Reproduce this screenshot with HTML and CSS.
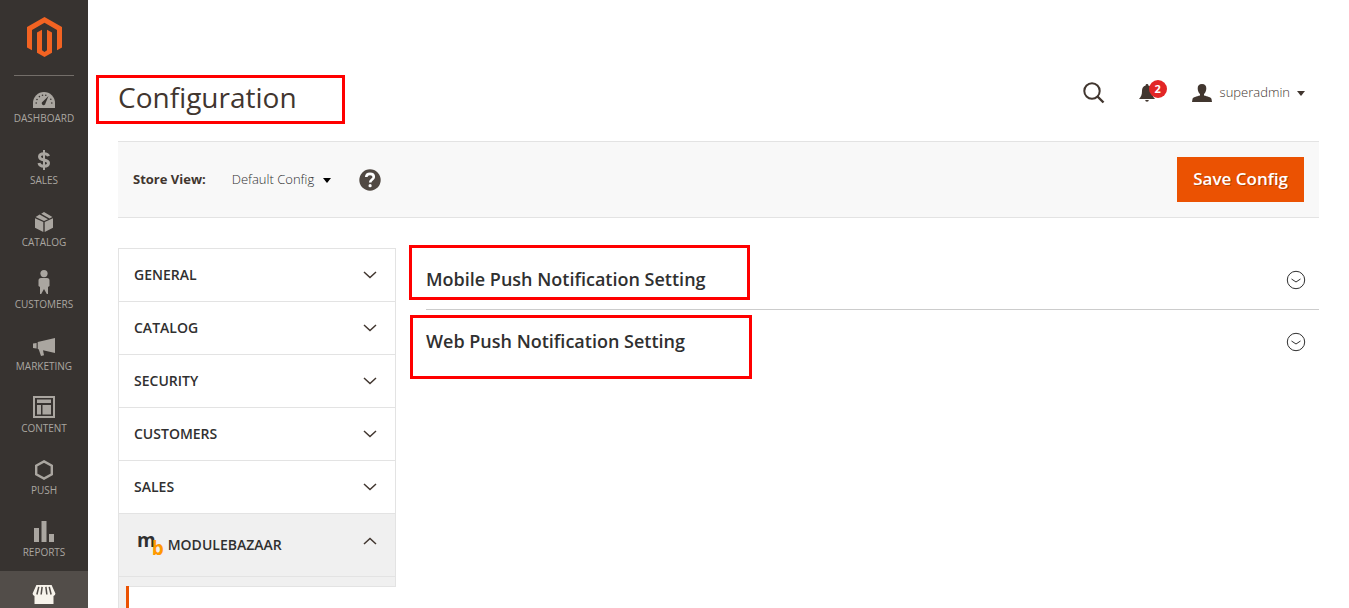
FILE: index.html
```html
<!DOCTYPE html>
<html lang="en">
<head>
<meta charset="utf-8">
<title>Configuration</title>
<link rel="stylesheet" href="styles.css">
</head>
<body>
<div class="page">
  <aside class="sidebar">
    <a class="logo" href="#" aria-label="Admin home">
      <svg width="35" height="40" viewBox="0 0 35 40" fill="#f26322"><path d="M17.500 0 35 10v20.500l-5 2.800V13L17.500 5.700 5 13v20.300l-5-2.800V10zM10 15.500l5-2.800v20.600l2.500 1.600 2.500-1.600V12.700l5 2.800v20.300L17.500 40 10 35.800z"/></svg>
    </a>
    <nav class="menu">
      <a class="menu-item" href="#"><span class="menu-icon"><svg width="22" height="16" viewBox="0 0 22 16"><path fill="currentColor" d="M0 16V11a11 11 0 0 1 22 0v5z"/><g fill="#373330"><path d="m15.500 4-3 7.200a1.900 1.900 0 1 1-2.600-1.700z"/><circle cx="3.200" cy="11" r=".8"/><circle cx="4" cy="7.500" r=".8"/><circle cx="6.400" cy="4.600" r=".8"/><circle cx="9.500" cy="3.200" r=".8"/><circle cx="12.800" cy="3.200" r=".8"/><circle cx="17.800" cy="7.300" r=".8"/><circle cx="18.800" cy="11" r=".8"/></g></svg></span><span>Dashboard</span></a>
      <a class="menu-item" href="#"><span class="menu-icon"><svg width="14" height="20" viewBox="0 0 14 20" fill="none" stroke="currentColor" stroke-width="3"><path d="M11.500 6.200C11 4.500 9.500 3.700 7 3.700c-2.700 0-4.500 1-4.500 3 0 4.500 9 2 9 6.400 0 2.200-1.900 3.200-4.500 3.200-2.800 0-4.600-1-5-3.200"/><path stroke-width="2" d="M7 0v20"/></svg></span><span>Sales</span></a>
      <a class="menu-item" href="#"><span class="menu-icon"><svg width="18" height="20" viewBox="0 0 18 20" fill="currentColor"><path d="M0 6.200 8.300 10v10L0 15.800zM18 6.200 9.700 10v10l8.300-4.200zM4.600 2.600 13 7.200 9 9 .6 5zM9 0l8.400 5-2.800 1.500L6.200 1.700z"/></svg></span><span>Catalog</span></a>
      <a class="menu-item" href="#"><span class="menu-icon"><svg width="12" height="24" viewBox="0 0 12 24" fill="currentColor"><circle cx="6" cy="3.600" r="3.600"/><path d="M3 8h6a2.500 2.500 0 0 1 2.500 2.500V16l-1.500 1V24H8.800L6 19l-2.800 5H2V17L.5 16v-5.500A2.500 2.500 0 0 1 3 8z"/></svg></span><span>Customers</span></a>
      <a class="menu-item" href="#"><span class="menu-icon"><svg width="22" height="18" viewBox="0 0 22 18" fill="currentColor"><path d="M0 5.500 3.600 5v5.500L0 10zM4.700 4 22 0v15L10 12.200l1 5.100-3 .7-2.300-6.700-1-.4z"/></svg></span><span>Marketing</span></a>
      <a class="menu-item" href="#"><span class="menu-icon"><svg width="22" height="22" viewBox="0 0 22 22"><path fill="none" stroke="currentColor" stroke-width="2" d="M1 1h20v20H1z"/><path fill="currentColor" d="M4 3.500h14v3.500H4zM4 9h4v9.500H4zM9.500 9H18v9.500H9.500z"/></svg></span><span>Content</span></a>
      <a class="menu-item" href="#"><span class="menu-icon"><svg width="18" height="20" viewBox="0 0 18 20" fill="none" stroke="currentColor" stroke-width="2.400"><path d="m9 1.400 7.800 4.300v8.600L9 18.600l-7.800-4.300V5.700z"/></svg></span><span>Push</span></a>
      <a class="menu-item" href="#"><span class="menu-icon"><svg width="20" height="21" viewBox="0 0 20 21" fill="currentColor"><path d="M0 7h5v14H0zM7.500 0h5v21h-5zM15 13h5v8h-5z"/></svg></span><span>Reports</span></a>
      <a class="menu-item active" href="#" aria-label="Stores"><span class="menu-icon"><svg width="24" height="19" viewBox="0 0 24 20"><path fill="currentColor" d="M4 0h16l4 9a2.500 2.500 0 0 1-2 2.500V20H2v-8.500A2.500 2.500 0 0 1 0 9z"/><path fill="none" stroke="#524d49" stroke-width="1.600" d="M6.500 2 4.500 10M10 2 9 10M14 2l1 8M17.500 2l2 8"/></svg></span></a>
    </nav>
  </aside>

  <main class="main">
    <header class="header">
      <h1 class="title">Configuration</h1>
      <div class="tools">
        <button class="tool" aria-label="Search"><svg width="22" height="22" viewBox="0 0 22 22" fill="none" stroke="#41362f" stroke-width="2"><circle cx="9" cy="9" r="7.700"/><path stroke-width="2.400" d="m14.500 14.500 6 6"/></svg></button>
        <button class="tool bell" aria-label="Notifications"><svg width="16" height="18" viewBox="0 0 16 18" fill="#41362f"><path d="M8 0a1.300 1.300 0 0 1 1.300 1.500C12 2.200 13 4 13 7c0 4 .8 5.500 3 8H0c2.200-2.500 3-4 3-8 0-3 1-4.800 3.700-5.500A1.300 1.300 0 0 1 8 0zM6.200 16h3.600a1.800 1.800 0 0 1-3.600 0z"/></svg><span class="badge">2</span></button>
        <button class="tool user"><svg width="20" height="18" viewBox="0 0 20 18" fill="#41362f"><path d="M10 0c3 0 4.300 1.800 4.300 4.300 0 2.300-.8 4.500-2.300 5.700v1.500c3.500 1 7 1.500 7.500 3.500l.5 3H0l.5-3c.5-2 4-2.500 7.500-3.500V10C6.500 8.800 5.700 6.600 5.700 4.300 5.700 1.800 7 0 10 0z"/></svg><span>superadmin</span><i class="caret"></i></button>
      </div>
    </header>

    <section class="toolbar">
      <span class="store-label" id="store-label">Store View:</span>
      <button class="store" aria-labelledby="store-label store-value"><span id="store-value">Default Config</span><i class="caret dark"></i></button>
      <a class="help" href="#" aria-label="Help"><svg width="22" height="22" viewBox="0 0 22 22"><circle cx="11" cy="11" r="10.700" fill="#514943"/><path fill="none" stroke="#fff" stroke-width="2.600" d="M7.200 8C7.400 5.800 9 4.900 11 4.900c2.300 0 3.800 1.100 3.800 3 0 2.500-3.600 2.600-3.600 5.600"/><circle cx="11.100" cy="16.700" r="1.600" fill="#fff"/></svg></a>
      <button class="save">Save Config</button>
    </section>

    <div class="columns">
      <nav class="tabs">
        <button class="tab"><span>General</span><svg width="14" height="8" viewBox="0 0 14 8"><path d="m1 1 6 5.500L13 1"/></svg></button>
        <button class="tab"><span>Catalog</span><svg width="14" height="8" viewBox="0 0 14 8"><path d="m1 1 6 5.500L13 1"/></svg></button>
        <button class="tab"><span>Security</span><svg width="14" height="8" viewBox="0 0 14 8"><path d="m1 1 6 5.500L13 1"/></svg></button>
        <button class="tab"><span>Customers</span><svg width="14" height="8" viewBox="0 0 14 8"><path d="m1 1 6 5.500L13 1"/></svg></button>
        <button class="tab"><span>Sales</span><svg width="14" height="8" viewBox="0 0 14 8"><path d="m1 1 6 5.500L13 1"/></svg></button>
        <button class="tab open"><span class="brand"><span class="brand-m">m</span><span class="brand-b">b</span></span><span>Modulebazaar</span><svg width="14" height="8" viewBox="0 0 14 8"><path d="M1 7 7 1.500 13 7"/></svg></button>
        <div class="tab-panel"><div class="tab-link"></div></div>
      </nav>
      <div class="sections">
        <button class="section">Mobile Push Notification Setting<svg width="20" height="20" viewBox="0 0 20 20"><circle cx="10" cy="10" r="8.700"/><path d="m5.500 9 4.500 3L14.500 9"/></svg></button>
        <button class="section">Web Push Notification Setting<svg width="20" height="20" viewBox="0 0 20 20"><circle cx="10" cy="10" r="8.700"/><path d="m5.500 9 4.500 3L14.500 9"/></svg></button>
      </div>
    </div>
  </main>
  <div class="mark mark-title"></div>
  <div class="mark mark-mobile"></div>
  <div class="mark mark-web"></div>
</div>
</body>
</html>
```
FILE: styles.css
```css
* { box-sizing: border-box; }
body { margin: 0; background: #fff; color: #303030; font-family: "Open Sans", "Noto Sans", sans-serif; font-size: 14px; }
a { color: inherit; text-decoration: none; }
button { margin: 0; padding: 0; border: 0; background: none; color: inherit; font: inherit; cursor: pointer; }
svg { display: block; flex: none; }

.page { position: relative; display: flex; height: 100vh; overflow: hidden; }

.sidebar { flex: none; width: 88px; background: #373330; color: #aaa6a0; }
.logo { display: flex; justify-content: center; height: 76px; margin: 0 14px -1px; padding-top: 17px; border-bottom: 1px solid #736e69; }
.menu-item { display: flex; flex-direction: column; align-items: center; gap: 4px; height: 62px; padding-top: 9px; font-size: 10px; line-height: 12px; text-transform: uppercase; }
.menu-icon { display: flex; align-items: flex-end; justify-content: center; height: 24px; }
.menu-item.active { background: #524d49; color: #f7f3eb; }

.main { flex: 1; min-width: 0; padding: 0 30px; }
.header { display: flex; justify-content: space-between; height: 141px; padding-top: 77px; }
.title { margin: 0; color: #41362f; font-size: 28px; font-weight: 400; line-height: 40px; }
.tools { display: flex; align-items: center; height: 32px; color: #41362f; font-size: 13px; font-weight: 300; }
.bell { position: relative; margin-left: 34px; }
.badge { position: absolute; top: -4px; left: 10px; width: 18px; height: 18px; border-radius: 50%; background: #e22626; color: #fff; font-size: 11px; font-weight: 700; line-height: 18px; text-align: center; }
.user { display: flex; align-items: center; margin: 0 14px 0 37px; line-height: 16px; }
.user span { margin-left: 8px; padding-bottom: 2px; }
.caret { margin-left: 7px; border: 4px solid transparent; border-top: 5px solid #41362f; border-bottom: 0; }
.caret.dark { margin: 2px 0 0 9px; border-top-color: #000; }

.toolbar { display: flex; align-items: center; padding: 15px; border: solid #e3e3e3; border-width: 1px 0; background: #f8f8f8; font-size: 13px; line-height: 16px; }
.store-label { padding-bottom: 2px; font-weight: 700; color: #41362f; }
.store { display: flex; align-items: center; margin: 0 28px 0 26px; font-weight: 300; }
.store span { padding-bottom: 2px; }
.save { height: 45px; margin-left: auto; padding: 0 16px 2px; background: #eb5202; color: #fff; font-size: 17px; font-weight: 600; line-height: 22px; text-shadow: 1px 1px 0 rgba(0, 0, 0, .25); }

.columns { display: flex; align-items: flex-start; gap: 30px; padding-top: 30px; }
.tabs { flex: none; width: 278px; border: 1px solid #e3e3e3; border-top: 0; }
.tab { display: flex; align-items: center; width: 100%; height: 53px; padding: 0 18px 0 15px; border-top: 1px solid #e3e3e3; font-size: 14px; font-weight: 600; text-transform: uppercase; }
.tab > span { padding-bottom: 2px; }
.tab svg { margin-left: auto; fill: none; stroke: #41362f; stroke-width: 1.5; }
.tab.open { height: 63px; background: #f0f0f0; }
.tab.open svg { margin-bottom: 8px; }
.brand { display: flex; margin: 0 4px 0 3px; text-transform: none; font-size: 19px; font-weight: 700; line-height: 20px; }
.brand-m { margin-right: -4px; }
.brand-b { padding-top: 8px; color: #f90; }
.tab-panel { padding-top: 9px; border-top: 1px solid #e3e3e3; background: #f0f0f0; }
.tab-link { height: 60px; margin: 0 -1px 0 7px; border-left: 3px solid #eb5202; background: #fff; box-shadow: inset 0 1px 0 #e3e3e3; }

.sections { flex: 1; min-width: 0; }
.section { display: flex; align-items: center; justify-content: space-between; width: 100%; height: 62px; padding-right: 13px; border-bottom: 1px solid #ccc; font-size: 18px; font-weight: 600; }
.section:last-child { border-bottom-color: transparent; }
.section svg { margin-top: 2px; fill: none; stroke: #303030; }

/* Highlight frames laid over the page */
.mark { position: absolute; border: 3px solid #f00; pointer-events: none; }
.mark-title { left: 96px; top: 75px; width: 249px; height: 49px; }
.mark-mobile { left: 409px; top: 245px; width: 341px; height: 55px; }
.mark-web { left: 410px; top: 315px; width: 342px; height: 64px; }
```
